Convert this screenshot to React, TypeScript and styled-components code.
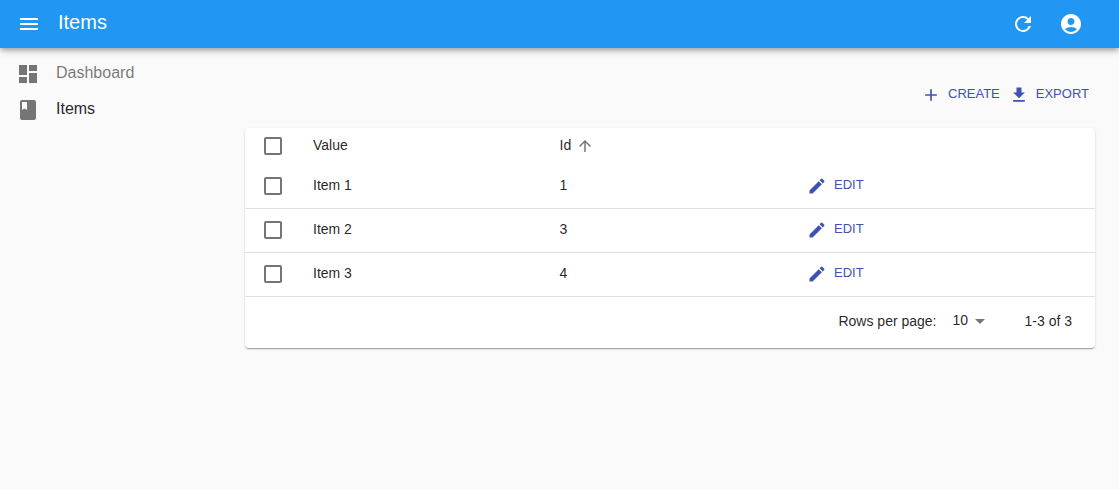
import React, { useState } from "react";
import styled, { createGlobalStyle } from "styled-components";
import {
  MdAccountCircle,
  MdAdd,
  MdArrowDropDown,
  MdArrowUpward,
  MdBook,
  MdDashboard,
  MdEdit,
  MdGetApp,
  MdMenu,
  MdRefresh,
} from "react-icons/md";

const GlobalStyle = createGlobalStyle`
  *, *::before, *::after { box-sizing: border-box; }
  body {
    margin: 0;
    background: #fafafa;
    color: rgba(0, 0, 0, 0.87);
    font-family: Helvetica, "Liberation Sans", Arial, sans-serif;
    font-size: 14px;
    line-height: 20px;
  }
`;

const AppBar = styled.header`
  position: relative;
  display: flex;
  align-items: center;
  height: 48px;
  padding: 0 24px 0 5px;
  background: #2196f3;
  color: #fff;
  box-shadow: 0 2px 4px -1px rgba(0, 0, 0, 0.2), 0 4px 5px 0 rgba(0, 0, 0, 0.14),
    0 1px 10px 0 rgba(0, 0, 0, 0.12);
`;

const IconButton = styled.button`
  display: flex;
  align-items: center;
  justify-content: center;
  width: 48px;
  height: 48px;
  padding: 0;
  border: 0;
  background: none;
  color: inherit;
  font-size: 24px;
  cursor: pointer;
`;

const Title = styled.h1`
  flex: 1;
  margin: 0;
  padding: 0 5px 4px;
  font-size: 20px;
  font-weight: 400;
  line-height: 32px;
`;

const Body = styled.div`
  display: flex;
`;

const Sidebar = styled.nav`
  display: flex;
  flex-direction: column;
  flex: 0 0 240px;
  padding-top: 8px;
`;

const MenuLink = styled.a<{ $active?: boolean }>`
  display: flex;
  align-items: center;
  gap: 16px;
  height: 36px;
  padding: 0 16px;
  color: ${(p) => (p.$active ? "rgba(0, 0, 0, 0.87)" : "rgba(0, 0, 0, 0.54)")};
  font-size: 16px;
  line-height: 24px;
  text-decoration: none;

  svg {
    flex: none;
    color: #757575;
    font-size: 24px;
  }
`;

const Label = styled.span`
  display: block;
  padding-bottom: 2px;
`;

const Main = styled.main`
  flex: 1;
  min-width: 0;
  padding: 32px 24px 24px 5px;
`;

const Toolbar = styled.div`
  display: flex;
  justify-content: flex-end;
  gap: 2px;
  padding-bottom: 18px;
`;

const TextButton = styled.button`
  display: inline-flex;
  align-items: center;
  gap: 7px;
  height: 30px;
  padding: 0 6px 0 1px;
  border: 0;
  border-radius: 4px;
  background: none;
  color: #3f51b5;
  font-family: inherit;
  font-size: 13px;
  line-height: 20px;
  text-transform: uppercase;
  vertical-align: middle;
  cursor: pointer;

  svg {
    flex: none;
    font-size: 20px;
  }
`;

const Card = styled.section`
  border-radius: 4px;
  background: #fff;
  box-shadow: 0 2px 1px -1px rgba(0, 0, 0, 0.2), 0 1px 1px 0 rgba(0, 0, 0, 0.14),
    0 1px 3px 0 rgba(0, 0, 0, 0.12);
`;

const Table = styled.table`
  width: 100%;
  table-layout: fixed;
  border-collapse: separate;
  border-spacing: 0;
`;

const Column = styled.col<{ $width: string }>`
  width: ${(p) => p.$width};
`;

const HeadCell = styled.th`
  height: 37px;
  padding: 0 0 1px;
  font-weight: 400;
  text-align: left;
  vertical-align: middle;
`;

const Cell = styled.td`
  height: 44px;
  padding: 0 0 2px;
  border-bottom: 1px solid #e0e0e0;
  vertical-align: middle;
`;

const SortButton = styled.button`
  display: flex;
  align-items: center;
  gap: 5px;
  padding: 0;
  border: 0;
  background: none;
  color: inherit;
  font: inherit;
  cursor: pointer;

  svg {
    color: #757575;
    font-size: 18px;
  }
`;

const Checkbox = styled.input`
  display: block;
  appearance: none;
  width: 18px;
  height: 18px;
  margin: 0 0 0 19px;
  border: 2px solid #757575;
  border-radius: 2px;
  cursor: pointer;

  &:checked {
    background: #757575;
  }
`;

const Pagination = styled.footer`
  display: flex;
  align-items: center;
  justify-content: flex-end;
  height: 51px;
  padding: 0 23px 3px 0;
`;

const SelectWrap = styled.span`
  position: relative;
  display: flex;
  align-items: center;
  margin: 0 32px 0 8px;

  svg {
    position: absolute;
    right: 1px;
    color: #757575;
    font-size: 24px;
    pointer-events: none;
  }
`;

const Select = styled.select`
  appearance: none;
  width: 48px;
  height: 24px;
  padding: 0 24px 2px 8px;
  border: 0;
  background: none;
  color: inherit;
  font: inherit;
  cursor: pointer;
`;

const items = [
  { id: 1, value: "Item 1" },
  { id: 3, value: "Item 2" },
  { id: 4, value: "Item 3" },
];

export default function App() {
  const [selected, setSelected] = useState<number[]>([]);
  const toggle = (id: number) =>
    setSelected((ids) => (ids.includes(id) ? ids.filter((i) => i !== id) : [...ids, id]));
  const allSelected = selected.length === items.length;

  return (
    <>
      <GlobalStyle />
      <AppBar>
        <IconButton type="button" aria-label="Toggle menu">
          <MdMenu />
        </IconButton>
        <Title>Items</Title>
        <IconButton type="button" aria-label="Refresh">
          <MdRefresh />
        </IconButton>
        <IconButton type="button" aria-label="Profile">
          <MdAccountCircle />
        </IconButton>
      </AppBar>
      <Body>
        <Sidebar>
          <MenuLink href="#dashboard">
            <MdDashboard />
            <Label>Dashboard</Label>
          </MenuLink>
          <MenuLink href="#items" $active aria-current="page">
            <MdBook />
            <Label>Items</Label>
          </MenuLink>
        </Sidebar>
        <Main>
          <Toolbar>
            <TextButton type="button">
              <MdAdd />
              <Label>Create</Label>
            </TextButton>
            <TextButton type="button">
              <MdGetApp />
              <Label>Export</Label>
            </TextButton>
          </Toolbar>
          <Card>
            <Table>
              <colgroup>
                <Column $width="8%" />
                <Column $width="29%" />
                <Column $width="29%" />
                <Column $width="34%" />
              </colgroup>
              <thead>
                <tr>
                  <HeadCell>
                    <Checkbox
                      type="checkbox"
                      aria-label="Select all"
                      checked={allSelected}
                      onChange={() => setSelected(allSelected ? [] : items.map((i) => i.id))}
                    />
                  </HeadCell>
                  <HeadCell>
                    <Label>Value</Label>
                  </HeadCell>
                  <HeadCell aria-sort="ascending">
                    <SortButton type="button">
                      <Label>Id</Label>
                      <MdArrowUpward />
                    </SortButton>
                  </HeadCell>
                  <HeadCell />
                </tr>
              </thead>
              <tbody>
                {items.map((item) => (
                  <tr key={item.id}>
                    <Cell>
                      <Checkbox
                        type="checkbox"
                        aria-label={`Select ${item.value}`}
                        checked={selected.includes(item.id)}
                        onChange={() => toggle(item.id)}
                      />
                    </Cell>
                    <Cell>
                      <Label>{item.value}</Label>
                    </Cell>
                    <Cell>
                      <Label>{item.id}</Label>
                    </Cell>
                    <Cell>
                      <TextButton type="button">
                        <MdEdit />
                        <Label>Edit</Label>
                      </TextButton>
                    </Cell>
                  </tr>
                ))}
              </tbody>
            </Table>
            <Pagination>
              <label htmlFor="rows-per-page">Rows per page:</label>
              <SelectWrap>
                <Select id="rows-per-page" defaultValue="10">
                  <option>5</option>
                  <option>10</option>
                  <option>25</option>
                </Select>
                <MdArrowDropDown />
              </SelectWrap>
              <span>1-3 of 3</span>
            </Pagination>
          </Card>
        </Main>
      </Body>
    </>
  );
}
